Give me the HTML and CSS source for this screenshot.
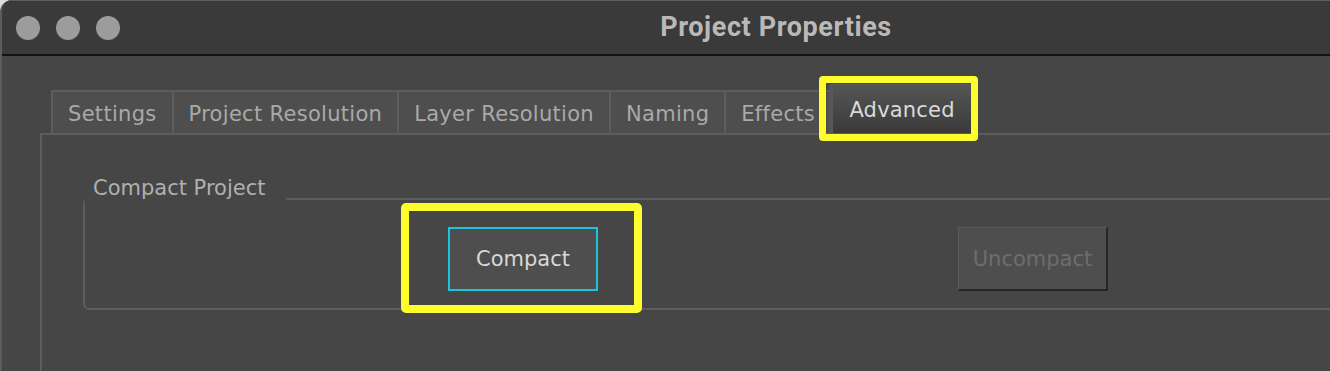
FILE: index.html
```html
<!DOCTYPE html>
<html lang="en">
<head>
  <meta charset="UTF-8">
  <meta name="viewport" content="width=device-width, initial-scale=1.0">
  <title>Project Properties</title>
  <link rel="stylesheet" href="styles.css">
</head>
<body>
  <div class="window">
    <div class="titlebar">
      <div class="lights">
        <span class="light"></span>
        <span class="light"></span>
        <span class="light"></span>
      </div>
      <div class="title">Project Properties</div>
      <div></div>
    </div>

    <div class="window-body">
      <div class="tabs">
        <div class="tab">Settings</div>
        <div class="tab">Project Resolution</div>
        <div class="tab">Layer Resolution</div>
        <div class="tab">Naming</div>
        <div class="tab">Effects</div>
        <div class="tab active">Advanced</div>
      </div>

      <div class="pane">
        <fieldset class="group">
          <legend>Compact Project</legend>
          <div class="group-body">
            <div class="mark">
              <button class="btn focused">Compact</button>
            </div>
            <button class="btn" disabled>Uncompact</button>
          </div>
        </fieldset>
      </div>
    </div>
  </div>
</body>
</html>
```

FILE: styles.css
```css
:root {
  --bg-body: #464646;
  --bg-title: #3a3a3a;
  --bg-tab: #4e4e4e;
  --line: #5d5d5d;
  --text: #a9a9a9;
  --text-light: #dadada;
  --mark: #fdfc2c;
  --focus: #16c7dd;
}

* {
  box-sizing: border-box;
}

body {
  margin: 0;
  background-color: #dedede;
  overflow: hidden;
  font-family: "DejaVu Sans", "Noto Sans", sans-serif;
  font-size: 21px;
  color: var(--text);
}

.window {
  width: 1552px;
  height: 371px;
  background-color: var(--bg-body);
  border-radius: 12px 0 0 0;
  border-left: 2px solid #5c5c5c;
  overflow: hidden;
  display: flex;
  flex-direction: column;
}

/* title bar */
.titlebar {
  height: 56px;
  flex: none;
  display: grid;
  grid-template-columns: 1fr auto 1fr;
  align-items: center;
  background-color: var(--bg-title);
  border-top: 1px solid #5e5e5e;
  border-bottom: 2px solid #121212;
}

.lights {
  display: flex;
  gap: 16px;
  padding-left: 14px;
}

.light {
  width: 24px;
  height: 24px;
  border-radius: 50%;
  background-color: #9c9c9c;
}

.title {
  font-family: Roboto, "Liberation Sans", sans-serif;
  font-weight: 700;
  font-size: 27px;
  letter-spacing: 0.6px;
  color: #b9b9b9;
  margin: -2px 0 0 -2px;
}

/* tabs */
.window-body {
  flex: 1;
  display: flex;
  flex-direction: column;
  padding: 28px 0 0 38px;
}

.tabs {
  display: flex;
  align-items: flex-end;
  margin-left: 11px;
}

.tab {
  height: 43px;
  line-height: 41px;
  padding: 2px 15px 0 15px;
  letter-spacing: 0.3px;
  background-color: var(--bg-tab);
  border-top: 2px solid var(--line);
  border-left: 2px solid var(--line);
  white-space: nowrap;
}

.tab.active {
  position: relative;
  height: 49px;
  line-height: 45px;
  width: 142px;
  padding: 3px 0 0 0;
  text-align: center;
  letter-spacing: 0.2px;
  color: var(--text-light);
  border-top: 1px solid #5a5a5a;
  border-left: 4px solid #575757;
  background: linear-gradient(#555555, #3a3a3a);
  margin-left: -1px;
}

.tab.active::after {
  content: '';
  position: absolute;
  top: -9px;
  left: -14px;
  right: -7px;
  bottom: -8px;
  border: 7px solid var(--mark);
  border-radius: 4px;
  z-index: 2;
}

/* pane */
.pane {
  flex: 1;
  border-top: 2px solid var(--line);
  border-left: 2px solid var(--line);
  padding: 42px 0 0 41px;
}

.group {
  margin: 0;
  padding: 0;
  border: 2px solid var(--line);
  border-radius: 6px;
  min-width: 0;
}

.group legend {
  padding: 0 21px 22px 8px;
  line-height: 22px;
  color: #b0b0b0;
}

.group-body {
  display: flex;
  gap: 360px;
  padding: 6px 0 17px 363px;
}

.mark {
  position: relative;
}

.mark::after {
  content: '';
  position: absolute;
  top: -24px;
  left: -47px;
  right: -44px;
  bottom: -22px;
  border: 8px solid var(--mark);
  border-radius: 5px;
}

.btn {
  display: block;
  width: 150px;
  height: 64px;
  padding: 0;
  font-family: inherit;
  font-size: 21px;
  background-color: #4e4e4e;
  color: #6d6d6d;
  border: 1px solid #5a5a5a;
  border-right: 2px solid #262626;
  border-bottom: 2px solid #262626;
}

.btn.focused {
  color: #d8d8d8;
  border: 2px solid var(--focus);
}
```
